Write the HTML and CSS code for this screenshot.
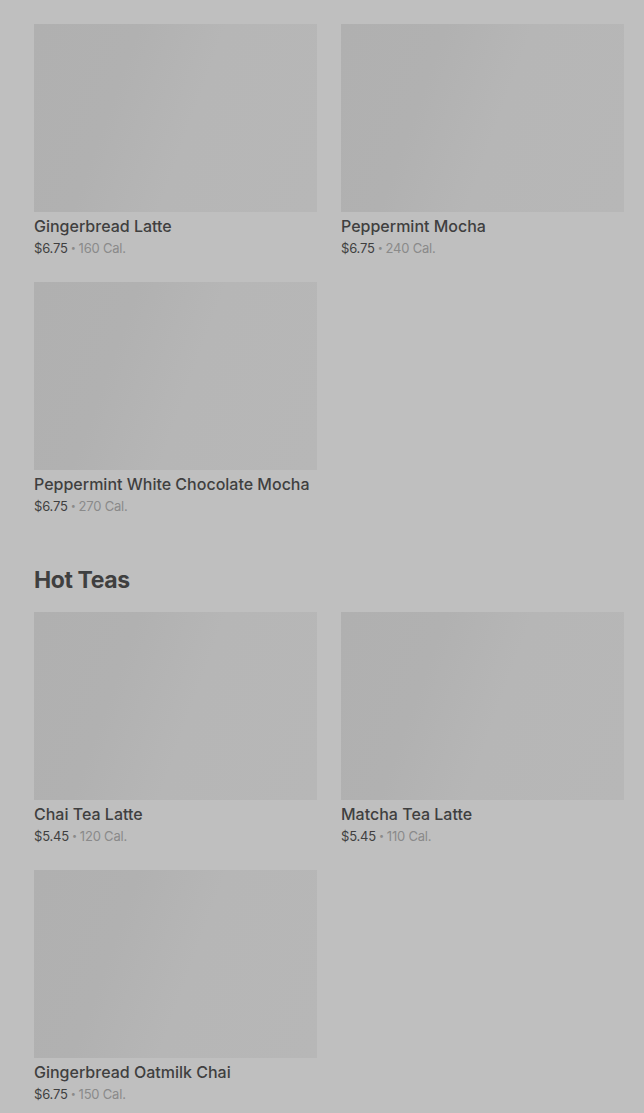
FILE: index.html
```html
<!DOCTYPE html>
<html lang="en">
<head>
    <meta charset="UTF-8">
    <meta name="viewport" content="width=device-width, initial-scale=1.0">
    <title>Menu</title>
    <link rel="stylesheet" href="styles.css">
</head>
<body>

<div class="menu">
    <section class="category">
        <div class="grid">
            <div class="item">
                <div class="thumb"></div>
                <h3>Gingerbread Latte</h3>
                <p class="meta">$6.75<span class="dot">•</span><span class="cal">160 Cal.</span></p>
            </div>
            <div class="item">
                <div class="thumb"></div>
                <h3>Peppermint Mocha</h3>
                <p class="meta">$6.75<span class="dot">•</span><span class="cal">240 Cal.</span></p>
            </div>
            <div class="item">
                <div class="thumb"></div>
                <h3>Peppermint White Chocolate Mocha</h3>
                <p class="meta">$6.75<span class="dot">•</span><span class="cal">270 Cal.</span></p>
            </div>
        </div>
    </section>

    <section class="category">
        <h2>Hot Teas</h2>
        <div class="grid">
            <div class="item">
                <div class="thumb"></div>
                <h3>Chai Tea Latte</h3>
                <p class="meta">$5.45<span class="dot">•</span><span class="cal">120 Cal.</span></p>
            </div>
            <div class="item">
                <div class="thumb"></div>
                <h3>Matcha Tea Latte</h3>
                <p class="meta">$5.45<span class="dot">•</span><span class="cal">110 Cal.</span></p>
            </div>
            <div class="item">
                <div class="thumb"></div>
                <h3>Gingerbread Oatmilk Chai</h3>
                <p class="meta">$6.75<span class="dot">•</span><span class="cal">150 Cal.</span></p>
            </div>
        </div>
    </section>
</div>

</body>
</html>
```

FILE: styles.css
```css
* {
    box-sizing: border-box;
    margin: 0;
    padding: 0;
}
body {
    font-family: Inter, 'Liberation Sans', sans-serif;
    background-color: #bfbfbf;
    color: #3f3f3f;
    overflow: hidden;
}
.menu {
    padding: 24px 20px 0 34px;
}
.category + .category {
    margin-top: 48px;
}
h2 {
    font-size: 23px;
    font-weight: 700;
    line-height: 32px;
    letter-spacing: -0.4px;
    margin-bottom: 16px;
}
.grid {
    display: grid;
    grid-template-columns: 283px 283px;
    column-gap: 24px;
    row-gap: 24px;
}
.thumb {
    height: 188px;
    background: linear-gradient(110deg, #b0b0b0 0%, #b1b1b1 30%, #b6b6b6 55%, #b7b7b7 100%);
}
h3 {
    font-size: 16px;
    font-weight: 500;
    line-height: 24px;
    margin-top: 2px;
}
.meta {
    height: 20px;
    font-size: 13px;
    line-height: 20px;
    letter-spacing: -0.2px;
}
.dot {
    font-size: 9px;
    line-height: 1;
    color: #8a8a8a;
    margin: 0 3px;
    vertical-align: 2px;
}
.cal {
    color: #8a8a8a;
}
```
